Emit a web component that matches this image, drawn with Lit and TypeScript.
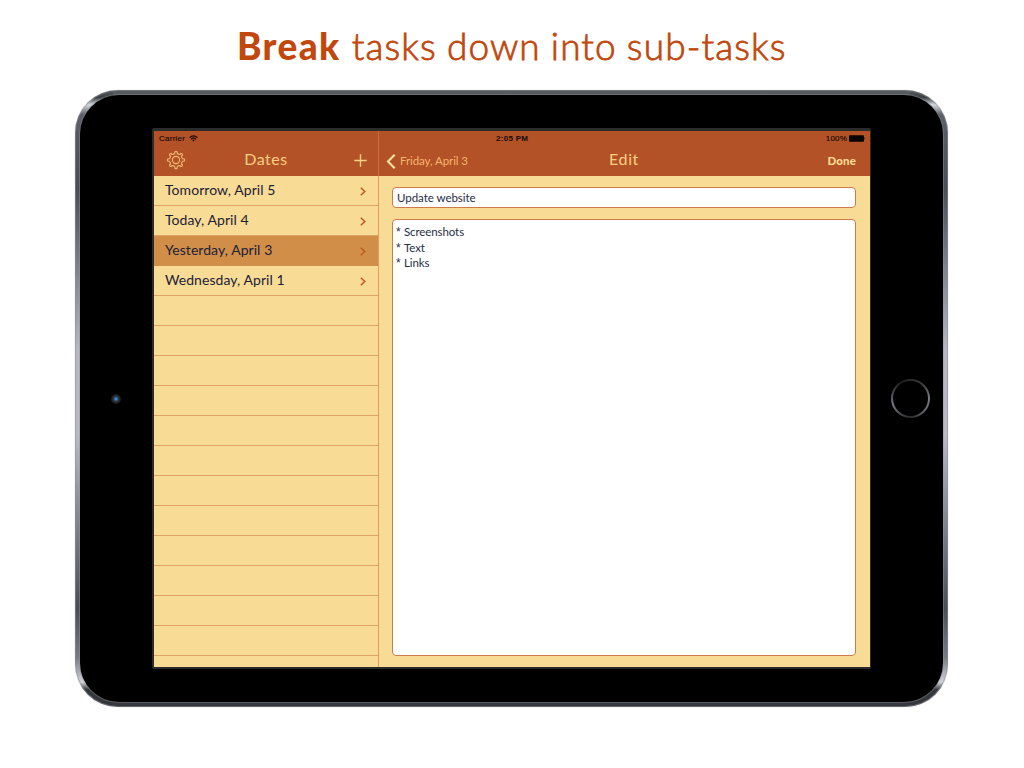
import { LitElement, html, css, svg } from "lit";
import { customElement, property } from "lit/decorators.js";
import { classMap } from "lit/directives/class-map.js";

interface DateRow {
  label: string;
  key: string;
  selected?: boolean;
}

const ROWS: DateRow[] = [
  { label: "Tomorrow, April 5", key: "r1" },
  { label: "Today, April 4", key: "r2" },
  { label: "Yesterday, April 3", key: "r3", selected: true },
  { label: "Wednesday, April 1", key: "r4" },
];

const NOTES = ["Screenshots", "Text", "Links"];

/** Outline of a cog with eight rounded teeth, centred on the origin. */
function gearPath(): string {
  const teeth = 8;
  const at = (r: number, a: number) => `${(r * Math.sin(a)).toFixed(2)} ${(-r * Math.cos(a)).toFixed(2)}`;
  const step = (Math.PI * 2) / teeth;
  let d = "";
  for (let i = 0; i < teeth; i++) {
    const a = i * step;
    d += `${i ? "L" : "M"}${at(6.7, a - step * 0.25)} L${at(8.3, a - step * 0.16)} Q${at(9, a)} ${at(8.3, a + step * 0.16)} L${at(6.7, a + step * 0.25)} Q${at(5.9, a + step * 0.5)} ${at(6.7, a + step * 0.75)} `;
  }
  return d + "Z";
}

@customElement("date-list")
export class DateList extends LitElement {
  @property({ attribute: false }) rows: DateRow[] = [];
  static styles = css`
    :host { display: block; flex: 1; overflow: hidden; }
    .row {
      box-sizing: border-box; height: 30px; border-bottom: 1px solid #e0a468;
      display: flex; align-items: center; justify-content: space-between;
      padding: 0 12px 0 11px; font-size: 14px; line-height: 20px; color: #1b2138; white-space: nowrap;
    }
    .row span { margin-bottom: 1px; letter-spacing: 0.06px; }
    .selected { background: #d08e48; border-bottom-color: #d08e48; }
    svg { display: block; width: 6px; height: 9px; margin-top: 1px; fill: none; stroke: #c05a25; stroke-width: 1.5; }
  `;
  render() {
    return html`
      ${this.rows.map(
        (r) => html`<div class=${classMap({ row: true, [r.key]: true, selected: !!r.selected })}>
          <span>${r.label}</span>
          <svg viewBox="0 0 6 9"><path d="M0.8 0.7 4.8 4.5 0.8 8.3" /></svg>
        </div>`
      )}
      ${Array.from({ length: 13 }, () => html`<div class="row"></div>`)}
    `;
  }
}

@customElement("app-root")
export class AppRoot extends LitElement {
  static styles = css`
    :host {
      display: block; width: 1024px; height: 768px; overflow: hidden; background: #fff;
      font-family: Lato, "Liberation Sans", sans-serif;
    }
    h1 {
      margin: 0; height: 90px; padding-left: 237px; box-sizing: border-box; line-height: 92px;
      font-size: 37px; font-weight: 400; color: #c1470c; white-space: nowrap; display: flex; gap: 11px;
    }
    h1 b { font-weight: 900; letter-spacing: 1.4px; }
    h1 span { font-weight: 300; letter-spacing: 1.12px; word-spacing: -1.2px; -webkit-text-stroke: 0.8px #c1470c; }
    .device {
      box-sizing: border-box; width: 873px; height: 617px; margin-left: 75px; padding: 5px; border-radius: 43px;
      background:
        linear-gradient(to bottom, #565b60, #34373b) center / calc(100% - 76px) 100% no-repeat,
        linear-gradient(to bottom, #565b60 0, #3b3f44 1.2%, #d5d8de 2.4%, #5a5e66 4%, #4a4d56 16%, #b6b7c1 42%, #b9bac4 56%, #4a4d56 84%, #777b83 92%, #d0d2d8 96%, #33363a 97.2%, #33363a 100%);
      box-shadow: inset 0 0 0 1px #8a8d9488, 0 0 1px #aaa;
    }
    .glass {
      box-sizing: border-box; width: 863px; height: 607px; border-radius: 39px; background: #000;
      box-shadow: 0 0 0 1px #92959c66;
      display: grid; grid-template-columns: 72px 719px 72px; align-items: center;
    }
    .camera, .home { justify-self: center; border-radius: 50%; }
    .camera {
      width: 10px; height: 10px; margin-top: 1px;
      background: radial-gradient(circle, #3f86d0 0 1px, #31506f 1.8px, #23272b 3.4px, #17191b 5px);
    }
    .home {
      width: 39px; height: 39px; margin-left: 7px; box-sizing: border-box; padding: 1.8px;
      background: conic-gradient(#2b2b2b 0deg, #3c3c3c 40deg, #7a7d83 90deg, #62656b 130deg, #2c2c2c 180deg, #484a4e 215deg, #7c7f84 250deg, #424448 290deg, #1c1c1c 330deg, #2b2b2b 360deg);
    }
    .home i { display: block; width: 100%; height: 100%; border-radius: 50%; background: #000; }
    .screen {
      box-sizing: border-box; width: 719px; height: 541px; padding: 3px 1px 2px 2px; background: #2b2b2b;
      border-radius: 2px; display: flex; align-self: start; margin-top: 33px;
    }
    .side { width: 224px; display: flex; flex-direction: column; background: #f8db94; border-right: 1px solid #df9f62; }
    .main { flex: 1; display: flex; flex-direction: column; background: #f8db94; }
    .bar { height: 45px; background: #b35226; color: #f9cf84; }
    .side .bar { margin-right: -1px; border-right: 1px solid #c56e40; }
    .status {
      height: 15px; display: flex; align-items: center; font: 8px/15px "Liberation Sans", sans-serif; color: #180a04;
    }
    .side .status { padding-left: 5px; gap: 4px; letter-spacing: 0.25px; }
    .side .status span, .pct { -webkit-text-stroke: 0.15px #180a04; }
    .main .status { display: grid; grid-template-columns: 1fr auto 46px; padding-right: 4px; }
    .time { font-weight: 700; padding-left: 117px; letter-spacing: 0.3px; }
    .pct { letter-spacing: 0.2px; margin-right: 2px; }
    .main .status svg { display: block; }
    .power { display: flex; align-items: center; justify-content: flex-end; grid-column: 3; }
    .nav { height: 30px; display: grid; align-items: center; line-height: 26px; white-space: nowrap; padding-bottom: 4px; box-sizing: border-box; }
    .side .nav { grid-template-columns: 45px 1fr 45px; }
    .main .nav { grid-template-columns: 160px 1fr 160px; grid-template-rows: 26px; }
    .nav svg { display: block; }
    .gear { width: 20px; height: 20px; margin-left: 12px; margin-top: 2px; fill: none; stroke: #f3bd73; stroke-width: 1.1; }
    .plus { width: 13px; height: 13px; margin-left: 21px; margin-top: 3px; stroke: #f9d287; stroke-width: 1.4; }
    .title { font-size: 16px; text-align: center; font-weight: 400; }
    .t1 { letter-spacing: 0.5px; }
    .t2 { letter-spacing: 0.6px; padding-right: 1px; }
    .back, .done { line-height: 20px; margin-top: 4px; font-size: 11.5px; }
    .back { display: flex; align-items: center; gap: 4px; padding-left: 7px; letter-spacing: -0.08px; color: #f3b56c; }
    .back svg { width: 10px; height: 15px; fill: none; stroke: #ffe39a; stroke-width: 2.1; }
    .done { font-weight: 900; text-align: right; padding-right: 14px; color: #ffda92; letter-spacing: 0.15px; }
    .form { flex: 1; padding: 11px 14px 11px 13px; display: flex; flex-direction: column; gap: 11px; color: #262d45; font-size: 11.5px; }
    .field, .notes { box-sizing: border-box; border: 1px solid #cd7c48; border-radius: 4px; background: #fff; }
    .field { height: 21px; line-height: 19px; padding-left: 4px; letter-spacing: -0.03px; }
    .notes { flex: 1; padding: 4.4px 3px; line-height: 15.4px; letter-spacing: -0.1px; }
    .line { display: flex; gap: 3px; }
    .star { width: 5px; font-family: "Liberation Sans", sans-serif; font-size: 12px; padding-top: 1px; margin-bottom: -1px; }
  `;

  render() {
    return html`
      <h1><b>Break</b><span>tasks down into sub-tasks</span></h1>
      <div class="device">
        <div class="glass">
          <div class="camera"></div>
          <div class="screen">
            <div class="side">
              <div class="bar">
                <div class="status">
                  <span>Carrier</span>
                  <svg width="9" height="7" viewBox="0 0 9 7" fill="none" stroke="#180a04" stroke-width="1.2">
                    <path d="M0.5 2.6Q4.5 -0.9 8.5 2.6M2.1 4.2Q4.5 2.1 6.9 4.2" />
                    <path d="M4.5 6.6 3.2 5.2Q4.5 4.2 5.8 5.2Z" fill="#180a04" stroke="none" />
                  </svg>
                </div>
                <div class="nav">
                  <svg class="gear" viewBox="-10 -10 20 20">${svg`<path d=${gearPath()} /><circle r="3.6" />`}</svg>
                  <div class="title t1">Dates</div>
                  <svg class="plus" viewBox="0 0 13 13"><path d="M6.5 0.3V12.7M0.3 6.5H12.7" /></svg>
                </div>
              </div>
              <date-list .rows=${ROWS}></date-list>
            </div>
            <div class="main">
              <div class="bar">
                <div class="status">
                  <span class="time">2:05 PM</span>
                  <span class="power">
                    <span class="pct">100%</span>
                    <svg width="17" height="7" viewBox="0 0 17 7" fill="#080300"><rect width="15" height="6.4" y="0.3" rx="0.8" /><path d="M15.5 2.2Q17 3.5 15.5 4.8Z" /></svg>
                  </span>
                </div>
                <div class="nav">
                  <div class="back">
                    <svg viewBox="0 0 10 15"><path d="M8.7 0.8 2 7.5 8.7 14.2" /></svg>
                    <span>Friday, April 3</span>
                  </div>
                  <div class="title t2">Edit</div>
                  <div class="done">Done</div>
                </div>
              </div>
              <div class="form">
                <div class="field">Update website</div>
                <div class="notes">
                  ${NOTES.map((n) => html`<div class="line"><span class="star">*</span><span>${n}</span></div>`)}
                </div>
              </div>
            </div>
          </div>
          <div class="home"><i></i></div>
        </div>
      </div>
    `;
  }
}
